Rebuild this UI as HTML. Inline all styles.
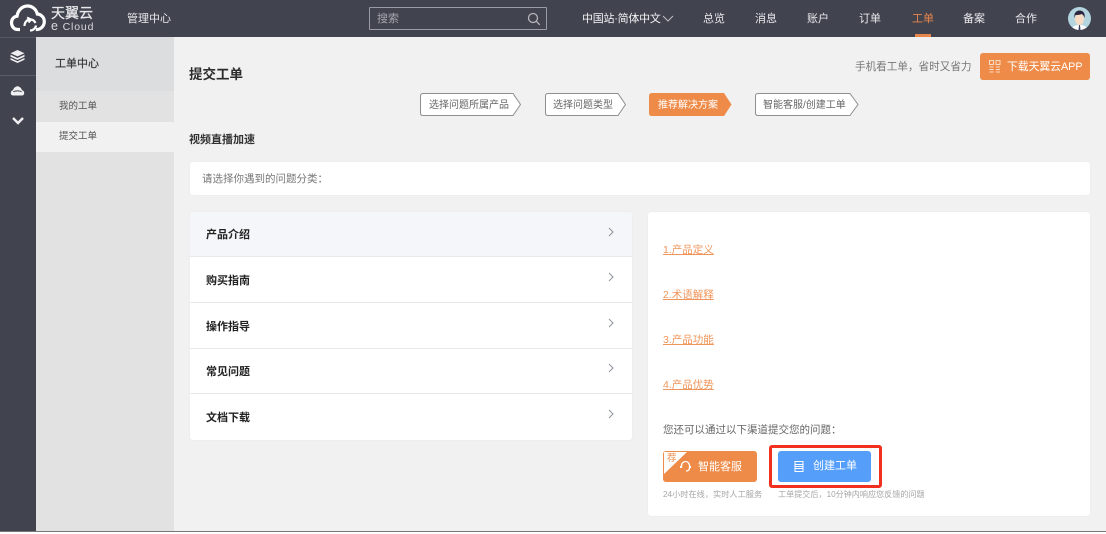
<!DOCTYPE html>
<html lang="zh"><head><meta charset="utf-8"><title>提交工单</title>
<style>
*{box-sizing:border-box}
html,body{margin:0;padding:0}
html{background:#f1f1f1}
body{width:1106px;height:534px;position:relative;overflow:hidden;background:#f1f1f1;font-family:"Liberation Sans","Noto Sans CJK SC",sans-serif;font-size:11px;color:#444;filter:blur(.3px)}
.a{position:absolute;white-space:nowrap}
.nav{color:#e9e9ec;font-size:11px;line-height:14px;top:12px}
.card{position:absolute;background:#fff;border-radius:3px;box-shadow:0 0 1px #ddd}
.row{position:absolute;left:0;width:442px;height:46px;border-bottom:1px solid #e8e8e8}
.row b{position:absolute;left:16px;top:16px;font-size:11px;line-height:16px;color:#222;font-weight:700}
.row svg{position:absolute;left:417px;top:14px}
.lnk{left:663px;color:#f0955a;text-decoration:underline;font-size:10.5px;line-height:14px}
.step{position:absolute;top:93px;height:23px}
.step svg{position:absolute;left:0;top:0}
.step span{position:absolute;top:6px;font-size:10px;line-height:13px;color:#666;white-space:nowrap}
</style></head><body>

<div class="a" style="left:0;top:0;width:1106px;height:37px;background:#41434f"></div>
<svg class="a" style="left:9px;top:3px" width="40" height="30" viewBox="0 0 40 30" fill="none" stroke="#fff" stroke-width="3.200"><path d="M11 26.500H9C4.500 26.500 2.500 23 2.500 19.500 2.500 16 5 13.500 8 13.200 8.800 7.500 13 3 18.500 3c5 0 8.800 3.500 9.800 8 3.600.2 7 3.200 7 7.500 0 4.500-3.500 8-7.500 8h-1"/><path d="M15.500 23c0-4 2.800-6.500 5.800-6.500 2.500 0 4.200 1.300 5.200 3.500M27 22.500c-.5 3-3 5-6 5" stroke-width="2.200"/><path d="M18 14.500l4.500 2-3 3" stroke-width="1.800"/></svg>
<div class="a" style="left:51px;top:5px;color:#e8e8ea;font-size:14px;line-height:16px;-webkit-text-stroke:.25px #e8e8ea">天翼云</div>
<div class="a" style="left:51px;top:20px;color:#d8d8dc;font-size:10.500px;line-height:12px;letter-spacing:.85px"><span style="font-size:12.500px">e</span> Cloud</div>
<div class="a nav" style="left:127px">管理中心</div>

<div class="a" style="left:369px;top:7px;width:178px;height:23px;border:1px solid #9a9ba3;border-radius:1px"></div>
<div class="a" style="left:377px;top:12px;color:#a6a7ad;font-size:11px;line-height:14px">搜索</div>
<svg class="a" style="left:527px;top:12px" width="14" height="14" viewBox="0 0 14 14" fill="none" stroke="#b5b6bb" stroke-width="1.300"><circle cx="6" cy="6" r="4.500"/><path d="M9.300 9.300l3.500 3.500"/></svg>

<div class="a nav" style="left:582px;color:#f4f4f5;letter-spacing:-.25px">中国站·简体中文</div>
<svg class="a" style="left:662px;top:15px" width="12" height="8" viewBox="0 0 12 8" fill="none" stroke="#bdbec3"><path d="M1 1l5 5 5-5"/></svg>
<div class="a nav" style="left:703px">总览</div>
<div class="a nav" style="left:755px">消息</div>
<div class="a nav" style="left:807px">账户</div>
<div class="a nav" style="left:859px">订单</div>
<div class="a nav" style="left:912px;color:#e8854a">工单</div>
<div class="a" style="left:915px;top:34px;width:16px;height:3px;background:#e8854a"></div>
<div class="a nav" style="left:963px">备案</div>
<div class="a nav" style="left:1015px">合作</div>
<svg class="a" style="left:1068px;top:7px" width="23" height="23" viewBox="0 0 23 23"><defs><clipPath id="c"><circle cx="11.500" cy="11.500" r="11.500"/></clipPath></defs><g clip-path="url(#c)"><rect width="23" height="23" fill="#b4d5df"/><path d="M3 23c1-4 5-5 8.500-5s7.500 1 8.500 5z" fill="#fff"/><ellipse cx="11.500" cy="12" rx="4.500" ry="6" fill="#f6dcc4"/><path d="M6.500 11c-1-5 2-7.500 5-7.500s6 2 5 7.500c-.5-2-1.500-3.500-3-4-2 1-5 1-6 1-.5 1-.8 2-1 3z" fill="#2b2640"/><path d="M11 18h1l.5 5h-2z" fill="#3b3f60"/></g></svg>

<div class="a" style="left:0;top:37px;width:36px;height:494px;background:#41434f"></div>
<div class="a" style="left:0;top:37px;width:36px;height:1px;background:#565862"></div>
<div class="a" style="left:0;top:75px;width:36px;height:1px;background:#5a5c66"></div>
<svg class="a" style="left:10px;top:50px" width="15" height="13" viewBox="0 0 15 13" fill="#eeeef0"><path d="M7.500 0L14.500 3.200 7.500 6.400 .5 3.200z"/><path d="M.5 4.800l7 3.200 7-3.200v1.900L7.500 9.900 .5 6.700z"/><path d="M.5 8l7 3.200 7-3.200v1.800L7.500 13 .5 9.800z"/></svg>
<svg class="a" style="left:10px;top:85px" width="15" height="12" viewBox="0 0 15 12"><path d="M3 10.500C1 10.500 .5 8.500 1 7c.3-1 1-1.500 2-1.700C3.500 3 5.500 1.200 7.500 1.200S11.500 3 12 5.300c1 .2 1.700.7 2 1.700.5 1.500 0 3.500-2 3.500z" fill="#f0f0f2"/><path d="M3.500 7c1-1.500 7-1.500 8 0" stroke="#41434f" fill="none"/></svg>
<svg class="a" style="left:11px;top:116px" width="14" height="10" viewBox="0 0 14 10" fill="none" stroke="#f0f0f2" stroke-width="2.400"><path d="M2 2l5 5 5-5"/></svg>

<div class="a" style="left:36px;top:37px;width:138px;height:494px;background:#e2e2e2"></div>
<div class="a" style="left:36px;top:37px;width:138px;height:54px;background:#dcddde"></div>
<div class="a" style="left:36px;top:122px;width:138px;height:30px;background:#f1f1f1"></div>
<div class="a" style="left:55px;top:57px;font-size:11px;line-height:14px;color:#333;-webkit-text-stroke:.2px #333">工单中心</div>
<div class="a" style="left:59px;top:101px;font-size:9.500px;line-height:12px;color:#555">我的工单</div>
<div class="a" style="left:59px;top:131px;font-size:9.500px;line-height:12px;color:#555">提交工单</div>

<div class="a" style="left:189px;top:66px;font-size:13.500px;line-height:18px;color:#2c2c2c;font-weight:700">提交工单</div>
<div class="a" style="left:855px;top:60px;font-size:10.600px;line-height:14px;color:#777">手机看工单，省时又省力</div>
<div class="a" style="left:980px;top:53px;width:110px;height:27px;background:#ee8b48;border-radius:3px"></div>
<svg class="a" style="left:989px;top:60px" width="12" height="13" viewBox="0 0 12 13" fill="none" stroke="#f8dcc6"><rect x=".5" y=".5" width="4" height="4"/><rect x="7" y=".5" width="4" height="4"/><path d="M.5 7h4M.5 9.500h4M.5 12h4M7 7h4M7 9.500h4M7 12h4"/></svg>
<div class="a" style="left:1007px;top:60px;font-size:10.800px;line-height:15px;color:#fff">下载天翼云APP</div>

<div class="step" style="left:420px;width:102px"><svg width="102" height="23" viewBox="0 0 102 23"><path d="M3 .5H93L100.500 11.500 93 22.500H3Q.5 22.500 .5 20V3Q.5 .5 3 .5Z" fill="#fff" stroke="#8f8f8f"/></svg><span style="left:9px">选择问题所属产品</span></div>
<div class="step" style="left:545px;width:82px"><svg width="82" height="23" viewBox="0 0 82 23"><path d="M3 .5H73L80.500 11.500 73 22.500H3Q.5 22.500 .5 20V3Q.5 .5 3 .5Z" fill="#fff" stroke="#8f8f8f"/></svg><span style="left:8px">选择问题类型</span></div>
<div class="step" style="left:649px;width:83px"><svg width="83" height="23" viewBox="0 0 83 23"><path d="M3 0H75L82.500 11.500 75 23H3Q0 23 0 20V3Q0 0 3 0Z" fill="#ee8b48"/></svg><span style="left:9px;color:#fff">推荐解决方案</span></div>
<div class="step" style="left:755px;width:104px"><svg width="104" height="23" viewBox="0 0 104 23"><path d="M3 .5H95L103 11.500 95 22.500H3Q.5 22.500 .5 20V3Q.5 .5 3 .5Z" fill="#fff" stroke="#8f8f8f"/></svg><span style="left:8px">智能客服/创建工单</span></div>

<div class="a" style="left:189px;top:133px;font-size:11px;line-height:15px;font-weight:700;color:#333">视频直播加速</div>
<div class="card" style="left:190px;top:162px;width:900px;height:33px"></div>
<div class="a" style="left:202px;top:172px;font-size:10.500px;line-height:14px;color:#777">请选择你遇到的问题分类：</div>

<div class="card" style="left:190px;top:212px;width:442px;height:228px;overflow:hidden">
 <div class="row" style="top:0;height:45px;background:#f5f6f9"><b style="top:15px">产品介绍</b><svg style="top:14px" width="8" height="12" viewBox="0 0 8 12" fill="none" stroke="#8d929c"><path d="M2 2L6 6l-4 4"/></svg></div>
 <div class="row" style="top:45px"><b style="top:16px">购买指南</b><svg style="top:14px" width="8" height="12" viewBox="0 0 8 12" fill="none" stroke="#8d929c"><path d="M2 2L6 6l-4 4"/></svg></div>
 <div class="row" style="top:91px"><b>操作指导</b><svg width="8" height="12" viewBox="0 0 8 12" fill="none" stroke="#8d929c"><path d="M2 2L6 6l-4 4"/></svg></div>
 <div class="row" style="top:137px;height:45px"><b style="top:15px">常见问题</b><svg style="top:13px" width="8" height="12" viewBox="0 0 8 12" fill="none" stroke="#8d929c"><path d="M2 2L6 6l-4 4"/></svg></div>
 <div class="row" style="top:182px;border:0"><b>文档下载</b><svg width="8" height="12" viewBox="0 0 8 12" fill="none" stroke="#8d929c"><path d="M2 2L6 6l-4 4"/></svg></div>
</div>

<div class="card" style="left:648px;top:212px;width:442px;height:304px"></div>
<div class="a lnk" style="top:243px">1.产品定义</div>
<div class="a lnk" style="top:288px">2.术语解释</div>
<div class="a lnk" style="top:333px">3.产品功能</div>
<div class="a lnk" style="top:378px">4.产品优势</div>
<div class="a" style="left:663px;top:423px;font-size:10.500px;line-height:14px;color:#666">您还可以通过以下渠道提交您的问题：</div>

<div class="a" style="left:663px;top:451px;width:94px;height:31px;background:#ee8b48;border-radius:3px;overflow:hidden"><svg style="position:absolute;left:0;top:0" width="24" height="24" viewBox="0 0 24 24"><path d="M1 1H24L1 23z" fill="#fff"/></svg></div>
<div class="a" style="left:667px;top:453px;font-size:9.500px;line-height:12px;color:#ee8b48">荐</div>
<svg class="a" style="left:680px;top:460px" width="11" height="13" viewBox="0 0 11 13" fill="none" stroke="#fff" stroke-width="1.300"><path d="M1.500 8V5.500a4 4 0 0 1 8 0V8M9.500 8c0 2-1.500 3-3.500 3"/><path d="M1 6v2M10 6v2" stroke-width="2"/></svg>
<div class="a" style="left:698px;top:460px;font-size:11px;line-height:15px;color:#fff">智能客服</div>

<div class="a" style="left:769px;top:445px;width:113px;height:43px;border:3px solid #f2301f;border-radius:3px"></div>
<div class="a" style="left:778px;top:451px;width:93px;height:31px;background:#559ffb;border-radius:3px"></div>
<svg class="a" style="left:794px;top:461px" width="10" height="11" viewBox="0 0 10 11" fill="none" stroke="#fff"><path d="M1 .5h8v10H1zM1 3.500h8M1 5.500h8M1 7.500h8"/></svg>
<div class="a" style="left:813px;top:459px;font-size:11px;line-height:15px;color:#fff">创建工单</div>

<div class="a" style="left:663px;top:489px;font-size:8.200px;line-height:12px;color:#a5a5a5">24小时在线，实时人工服务</div>
<div class="a" style="left:778px;top:489px;font-size:8.100px;line-height:12px;color:#a5a5a5">工单提交后，10分钟内响应您反馈的问题</div>

<div class="a" style="left:0;top:531px;width:1106px;height:1px;background:#777"></div>
<div class="a" style="left:0;top:532px;width:1106px;height:2px;background:#fff"></div>
</body></html>
